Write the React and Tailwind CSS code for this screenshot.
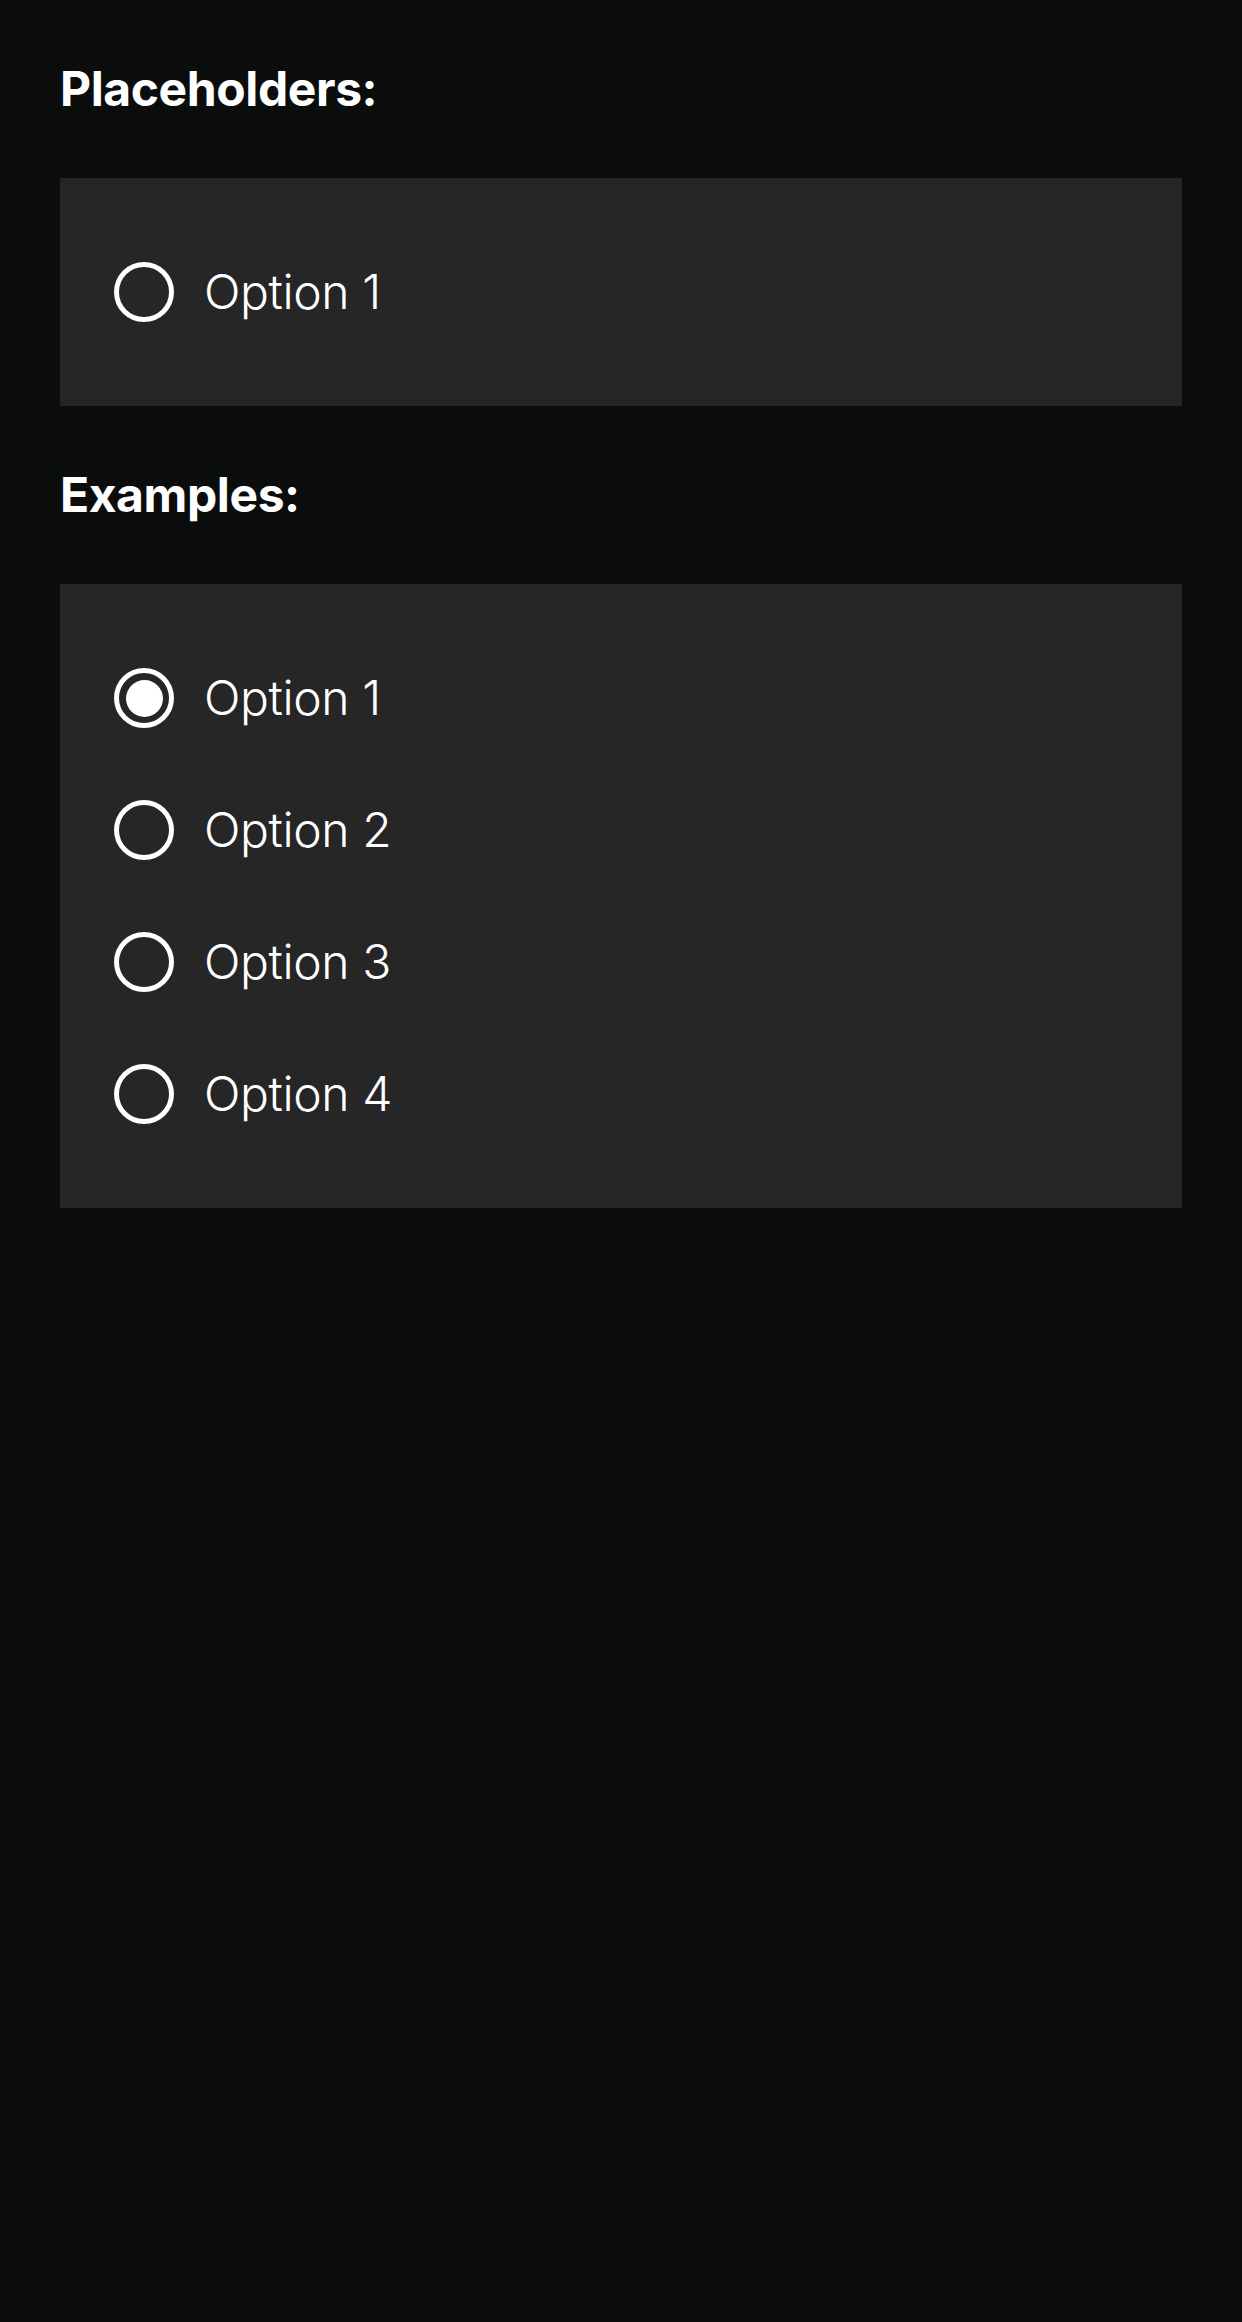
import React, { useState } from 'react';

const Radio = ({ checked }) => (
  <span className="flex h-[60px] w-[60px] shrink-0 items-center justify-center rounded-full border-[5px] border-white">
    {checked && <span className="h-[37px] w-[37px] rounded-full bg-white" />}
  </span>
);

const Option = ({ label, checked, onClick }) => (
  <button type="button" onClick={onClick} className="flex items-center gap-[30px] text-left">
    <Radio checked={checked} />
    <span className="text-[48px] leading-none font-light tracking-[-0.4px] text-white">{label}</span>
  </button>
);

const App = () => {
  const [selected, setSelected] = useState(0);
  const options = ['Option 1', 'Option 2', 'Option 3', 'Option 4'];

  return (
    <div className="min-h-[2322px] w-full bg-[#0b0c0c] px-[60px] font-['Inter',sans-serif]">
      <h2 className="py-[65px] text-[48px] leading-[48px] font-bold tracking-[-0.4px] text-white">Placeholders:</h2>
      <div className="flex flex-col bg-[#262626] py-[84px] pl-[54px]">
        <Option label="Option 1" checked={false} />
      </div>

      <h2 className="py-[65px] text-[48px] leading-[48px] font-bold tracking-[-0.4px] text-white">Examples:</h2>
      <div className="flex flex-col items-start gap-[72px] bg-[#262626] py-[84px] pl-[54px]">
        {options.map((opt, i) => (
          <Option key={opt} label={opt} checked={selected === i} onClick={() => setSelected(i)} />
        ))}
      </div>
    </div>
  );
};

export default App;
